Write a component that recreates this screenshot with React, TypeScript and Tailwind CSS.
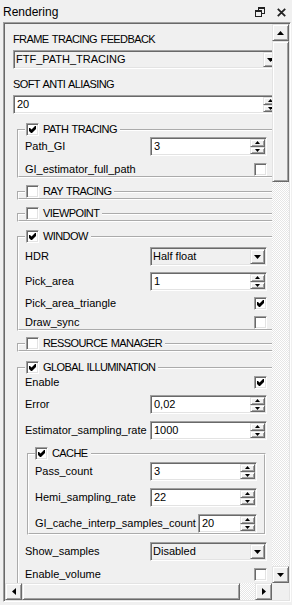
import type { ReactNode } from "react";

const sunken =
  "border border-t-[#a0a0a0] border-l-[#a0a0a0] border-r-white border-b-white shadow-[inset_1px_1px_0_#696969,inset_-1px_-1px_0_#e3e3e3]";
const raised =
  "border border-t-[#e3e3e3] border-l-[#e3e3e3] border-r-[#696969] border-b-[#696969] shadow-[inset_1px_1px_0_#ffffff,inset_-1px_-1px_0_#a0a0a0] bg-[#f0f0f0]";
const dither =
  "bg-[image:repeating-conic-gradient(#ffffff_0%_25%,#e6e6e6_0%_50%)] bg-[length:2px_2px]";

type Dir = "up" | "down" | "left" | "right";

const Tri = ({ dir, w, h }: { dir: Dir; w: number; h: number }) => {
  const pts =
    dir === "down"
      ? `0,0 ${w},0 ${w / 2},${h}`
      : dir === "up"
        ? `0,${h} ${w},${h} ${w / 2},0`
        : dir === "left"
          ? `${w},0 ${w},${h} 0,${h / 2}`
          : `0,0 0,${h} ${w},${h / 2}`;
  return (
    <svg width={w} height={h} viewBox={`0 0 ${w} ${h}`} className="block">
      <polygon points={pts} fill="#000" />
    </svg>
  );
};

const Check = ({ checked }: { checked?: boolean }) => (
  <span className={`flex h-[13px] w-[13px] shrink-0 items-center justify-center bg-white ${sunken}`}>
    {checked && (
      <svg width="7" height="7" viewBox="0 0 7 7" className="block">
        <polygon points="0,2 1,2 2.5,3.5 6,0 7,0 7,3 3,7 2,7 0,5" fill="#000" />
      </svg>
    )}
  </span>
);

const Spin = ({ value, className = "" }: { value: string; className?: string }) => (
  <div className={`flex h-[19px] shrink-0 bg-white p-px ${sunken} ${className}`}>
    <span className="flex-1 pl-[2px] leading-[15px]">{value}</span>
    <div className="flex w-[15px] flex-col">
      <div className={`flex flex-1 items-center justify-center ${raised}`}>
        <Tri dir="up" w={5} h={3} />
      </div>
      <div className={`flex flex-1 items-center justify-center ${raised}`}>
        <Tri dir="down" w={5} h={3} />
      </div>
    </div>
  </div>
);

const Combo = ({ value, className = "" }: { value: string; className?: string }) => (
  <div className={`flex h-[19px] shrink-0 bg-[#f0f0f0] p-px ${sunken} ${className}`}>
    <span className="flex-1 pl-[1px] leading-[15px]">{value}</span>
    <div className={`flex w-[15px] items-center justify-center ${raised}`}>
      <Tri dir="down" w={7} h={4} />
    </div>
  </div>
);

// Tahoma-ish capitals: tighter letters, wider spaces
const caps = "tracking-[-0.6px] [word-spacing:1px]";

const Caption = ({ children, className = "" }: { children: ReactNode; className?: string }) => (
  <div className={`h-[14px] leading-[14px] ${caps} ${className}`}>{children}</div>
);

const Row = ({ label, children, className = "", width = "w-[242px]" }: { label: string; children: ReactNode; className?: string; width?: string }) => (
  <div className={`flex h-[19px] items-center ${width} ${className}`}>
    <span className="flex-1 whitespace-nowrap">{label}</span>
    {children}
  </div>
);

const CheckRow = ({ label, checked, className = "" }: { label: string; checked?: boolean; className?: string }) => (
  <div className={`flex h-[13px] w-[242px] items-center justify-between ${className}`}>
    <span className="whitespace-nowrap">{label}</span>
    <Check checked={checked} />
  </div>
);

const Group = ({
  title,
  checked,
  children,
  className = "",
  legendPad = "pl-[1px]",
}: {
  title: string;
  checked?: boolean;
  children?: ReactNode;
  className?: string;
  legendPad?: string;
}) => (
  <fieldset className={`border-2 border-white [border-style:groove] pl-[6px] ${className}`}>
    <legend className={`flex h-[13px] items-center pr-[3px] ${legendPad}`}>
      <Check checked={checked} />
      <span className={`ml-[4px] whitespace-nowrap leading-[13px] ${caps}`}>{title}</span>
    </legend>
    {children}
  </fieldset>
);

const ScrollBtn = ({ dir, className = "" }: { dir: Dir; className?: string }) => (
  <div className={`flex items-center justify-center ${raised} ${className}`}>
    {dir === "up" || dir === "down" ? <Tri dir={dir} w={7} h={4} /> : <Tri dir={dir} w={4} h={7} />}
  </div>
);

export default function App() {
  return (
    <div className="flex h-[605px] w-[292px] flex-col bg-[#f0f0f0] font-['Liberation_Sans',Arial,sans-serif] text-[11px] text-black">
      {/* title bar */}
      <div className="flex h-[22px] shrink-0 items-center pl-[3px] pr-[6px] pt-[2px]">
        <span className="flex-1 text-[12px]">Rendering</span>
        <svg width="10" height="10" viewBox="0 0 10 10" className="block">
          <rect x="3.5" y="0.5" width="6" height="6" fill="none" stroke="#222" />
          <rect x="3" y="0" width="7" height="2" fill="#222" />
          <rect x="0.5" y="3.5" width="6" height="6" fill="#f0f0f0" stroke="#222" />
          <rect x="0" y="3" width="7" height="2" fill="#222" />
        </svg>
        <svg width="9" height="9" viewBox="0 0 9 9" className="ml-[12px] block">
          <path d="M0.8 0.8 L8.2 8.2 M8.2 0.8 L0.8 8.2" stroke="#222" strokeWidth="1.8" />
        </svg>
      </div>

      {/* content frame */}
      <div className={`ml-[3px] h-[580px] w-[288px] p-px ${sunken}`}>
        <div className="grid h-full grid-cols-[267px_17px] grid-rows-[559px_17px]">
          <div className="overflow-hidden">
            <div className="w-[290px] pl-[8px] pt-[8px]">
              <Caption>FRAME TRACING FEEDBACK</Caption>
              <Combo value="FTF_PATH_TRACING" className="mt-[4px] w-[267px]" />
              <Caption className="mt-[8px]">SOFT ANTI ALIASING</Caption>
              <Spin value="20" className="mt-[4px] w-[267px]" />

              <Group title="PATH TRACING" checked className="ml-[4px] mt-[9px] w-[266px]">
                <Row label="Path_GI" className="mt-[1px]">
                  <Spin value="3" className="w-[117px]" />
                </Row>
                <CheckRow label="GI_estimator_full_path" className="mt-[7px]" />
              </Group>

              <Group title="RAY TRACING" className="ml-[4px] mt-[7px] w-[266px]" />
              <Group title="VIEWPOINT" className="ml-[4px] mt-[7px] w-[266px]" />

              <Group title="WINDOW" checked className="ml-[4px] mt-[8px] w-[266px]">
                <Row label="HDR" className="mt-[4px]">
                  <Combo value="Half float" className="w-[117px]" />
                </Row>
                <Row label="Pick_area" className="mt-[6px]">
                  <Spin value="1" className="w-[117px]" />
                </Row>
                <CheckRow label="Pick_area_triangle" checked className="mt-[6px]" />
                <CheckRow label="Draw_sync" className="mt-[6px]" />
              </Group>

              <Group title="RESSOURCE MANAGER" className="ml-[4px] mt-[6px] w-[266px]" />

              <Group title="GLOBAL ILLUMINATION" checked className="ml-[4px] mt-[9px] w-[266px] pb-[20px]">
                <CheckRow label="Enable" checked className="mt-[2px]" />
                <Row label="Error" className="mt-[6px]">
                  <Spin value="0,02" className="w-[117px]" />
                </Row>
                <Row label="Estimator_sampling_rate" className="mt-[7px]">
                  <Spin value="1000" className="w-[117px]" />
                </Row>

                <Group title="CACHE" checked legendPad="pl-0" className="ml-[2px] mt-[7px] w-[239px]">
                  <Row label="Pass_count" width="w-[222px]" className="mt-[2px]">
                    <Spin value="3" className="w-[107px]" />
                  </Row>
                  <Row label="Hemi_sampling_rate" width="w-[222px]" className="mt-[7px]">
                    <Spin value="22" className="w-[107px]" />
                  </Row>
                  <Row label="GI_cache_interp_samples_count" width="w-[222px]" className="mt-[7px]">
                    <Spin value="20" className="w-[59px]" />
                  </Row>
                </Group>

                <Row label="Show_samples" className="mt-[7px]">
                  <Combo value="Disabled" className="w-[117px]" />
                </Row>
                <CheckRow label="Enable_volume" className="mt-[7px]" />
              </Group>
            </div>
          </div>

          {/* vertical scrollbar */}
          <div className="flex flex-col">
            <ScrollBtn dir="up" className="h-[17px]" />
            <div className={`h-[141px] ${raised}`} />
            <div className={`flex-1 ${dither}`} />
            <ScrollBtn dir="down" className="h-[17px]" />
          </div>

          {/* horizontal scrollbar */}
          <div className="flex">
            <ScrollBtn dir="left" className="w-[17px]" />
            <div className={`w-[218px] ${raised}`} />
            <div className={`flex-1 ${dither}`} />
            <ScrollBtn dir="right" className="w-[17px]" />
          </div>
          <div className="bg-[#f0f0f0]" />
        </div>
      </div>
    </div>
  );
}
